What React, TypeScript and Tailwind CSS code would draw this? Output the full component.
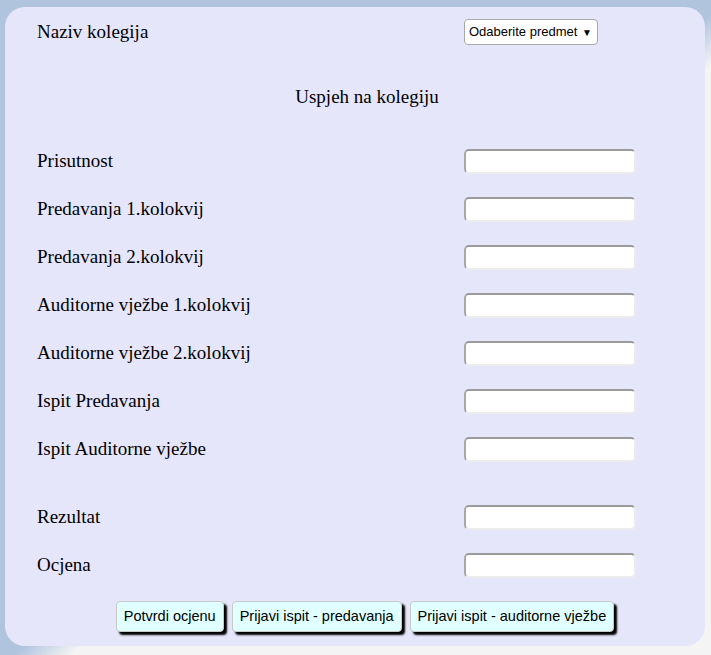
import React from 'react'

const fields = [
  'Prisutnost',
  'Predavanja 1.kolokvij',
  'Predavanja 2.kolokvij',
  'Auditorne vježbe 1.kolokvij',
  'Auditorne vježbe 2.kolokvij',
  'Ispit Predavanja',
  'Ispit Auditorne vježbe',
]

const results = ['Rezultat', 'Ocjena']

function Field({ label }: { label: string }) {
  return (
    <div className="grid grid-cols-[427px_172px] h-12 items-center">
      <span className="text-[19px] text-black">{label}</span>
      <input
        type="text"
        className="h-[25px] w-[172px] bg-white rounded-[5px] border-2 border-t-[#9a9a9a] border-l-[#a8a8a8] border-r-[#ececec] border-b-[#ececec] outline-none"
      />
    </div>
  )
}

function ActionButton({ children }: { children: React.ReactNode }) {
  return (
    <button
      type="button"
      className="h-[31px] px-[7px] bg-[#e0ffff] border border-[#c8c8c8] rounded-[4px] shadow-[3px_3px_2px_#000] text-[14.5px] text-black font-['Liberation_Sans',Arial,sans-serif]"
    >
      {children}
    </button>
  )
}

export default function App() {
  return (
    <div className="min-h-screen w-full pt-[7px] bg-[linear-gradient(to_bottom_right,#b0c4de_51%,#f4f4f4_55%)] font-['Liberation_Serif','Times_New_Roman',serif]">
      <div className="ml-[5px] w-[700px] h-[639px] bg-[#e6e6fa] rounded-[20px] pl-8 pt-px">
        {/* header row */}
        <div className="grid grid-cols-[427px_172px] h-12 items-center">
          <span className="text-[19px] text-black">Naziv kolegija</span>
          <div className="flex items-center justify-between w-[134px] h-[26px] bg-white border border-[#a9a9a9] rounded-[4px] pl-1 pr-[5px] font-['Liberation_Sans',Arial,sans-serif] text-[13px] text-black">
            <span>Odaberite predmet</span>
            <span className="text-[10px]">▼</span>
          </div>
        </div>

        <div className="mt-[17px] h-12 flex items-center justify-center pr-2 text-[19px] text-black">
          Uspjeh na kolegiju
        </div>

        <div className="mt-4 flex flex-col">
          {fields.map((f) => (
            <Field key={f} label={f} />
          ))}
        </div>

        <div className="mt-5 flex flex-col">
          {results.map((f) => (
            <Field key={f} label={f} />
          ))}
        </div>

        {/* buttons */}
        <div className="mt-3 flex justify-center gap-2 pr-3">
          <ActionButton>Potvrdi ocjenu</ActionButton>
          <ActionButton>Prijavi ispit - predavanja</ActionButton>
          <ActionButton>Prijavi ispit - auditorne vježbe</ActionButton>
        </div>
      </div>
    </div>
  )
}
